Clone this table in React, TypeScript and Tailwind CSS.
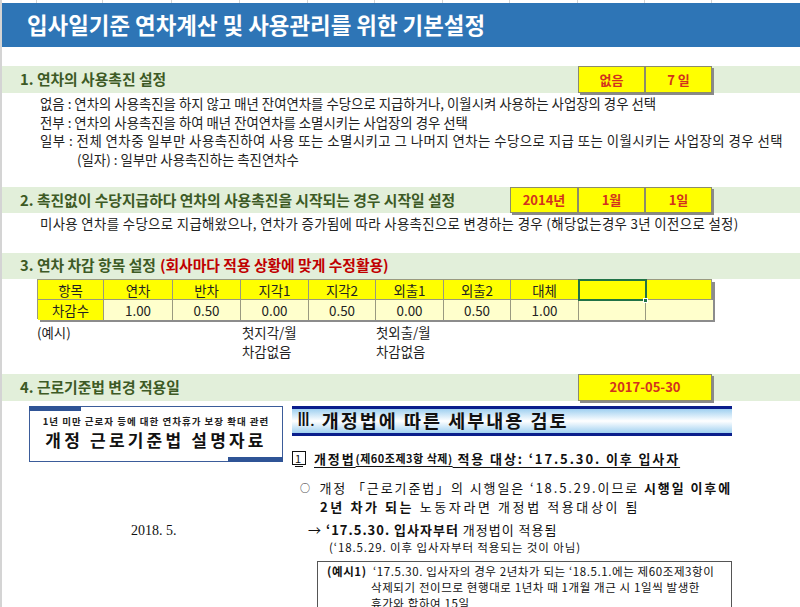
import React from 'react'

const cols = [35, 66, 69, 68, 68, 67, 68, 67, 68, 67, 67]

const yellowBox =
  'flex items-center justify-center bg-[#FFFF00] border border-[#8C8C6A] shadow-[2px_2px_0_#8A8A8A] text-[#D2321E] font-bold text-[13px]'

function SectionBar({ title, children, h = 'h-[27px]' }: { title: React.ReactNode; children?: React.ReactNode; h?: string }) {
  return (
    <div className={`grid grid-cols-[35px_66px_69px_68px_68px_67px_68px_67px_68px_67px_67px_1fr] ${h} bg-[#E2EFDA]`}>
      <div className="col-start-1 col-end-9 row-start-1 flex items-center pl-[18px] text-[14.8px] font-bold text-[#3D5A25] whitespace-nowrap">
        {title}
      </div>
      {children}
    </div>
  )
}

function Line({ children, indent = 'pl-[38px]', extra = '' }: { children: React.ReactNode; indent?: string; extra?: string }) {
  return <div className={`h-[18.5px] flex items-center ${indent} ${extra} text-[13.4px] text-[#222] whitespace-nowrap`}>{children}</div>
}

export default function App() {
  const heads = ['항목', '연차', '반차', '지각1', '지각2', '외출1', '외출2', '대체', '', '']
  const vals = ['차감수', '1.00', '0.50', '0.00', '0.50', '0.00', '0.50', '1.00', '', '']

  return (
    <div className="w-[800px] h-[607px] overflow-hidden bg-white font-['Noto_Sans_CJK_KR',sans-serif] border-l-[2px] border-[#D4D4D4]">
      {/* gridline strip */}
      <div className="flex h-[3px]">
        {cols.map((w, i) => (
          <div key={i} className="border-r border-[#D4D4D4]" style={{ width: w }} />
        ))}
      </div>

      {/* TITLE */}
      <div className="h-[44px] bg-[#2E75B6] flex items-center pl-[25px] text-white text-[22.4px] font-bold">
        입사일기준 연차계산 및 사용관리를 위한 기본설정
      </div>

      <div className="h-[19px]" />

      {/* 1 */}
      <SectionBar title="1. 연차의 사용촉진 설정">
        <div className={`col-start-10 row-start-1 ${yellowBox}`}>없음</div>
        <div className={`col-start-11 row-start-1 ${yellowBox}`}>7 일</div>
      </SectionBar>
      <div className="pt-[1px]">
        <Line>없음 : 연차의 사용촉진을 하지 않고 매년 잔여연차를 수당으로 지급하거나, 이월시켜 사용하는 사업장의 경우 선택</Line>
        <Line>전부 : 연차의 사용촉진을 하여 매년 잔여연차를 소멸시키는 사업장의 경우 선택</Line>
        <Line extra="tracking-[0.45px]">일부 : 전체 연차중 일부만 사용촉진하여 사용 또는 소멸시키고 그 나머지 연차는 수당으로 지급 또는 이월시키는 사업장의 경우 선택</Line>
        <Line indent="pl-[75px]">(일자) : 일부만 사용촉진하는 촉진연차수</Line>
      </div>

      <div className="h-[19px]" />

      {/* 2 */}
      <SectionBar h="h-[26px]" title="2. 촉진없이 수당지급하다 연차의 사용촉진을 시작되는 경우 시작일 설정">
        <div className={`col-start-9 row-start-1 ${yellowBox}`}>2014년</div>
        <div className={`col-start-10 row-start-1 ${yellowBox}`}>1월</div>
        <div className={`col-start-11 row-start-1 ${yellowBox}`}>1일</div>
      </SectionBar>
      <div className="pt-[1px]">
        <Line extra="tracking-[0.35px]">미사용 연차를 수당으로 지급해왔으나, 연차가 증가됨에 따라 사용촉진으로 변경하는 경우 (해당없는경우 3년 이전으로 설정)</Line>
      </div>

      <div className="h-[20px]" />

      {/* 3 */}
      <SectionBar
        h="h-[26px]"
        title={
          <>
            3. 연차 차감 항목 설정 <span className="ml-[4px] text-[#C00000]">(회사마다 적용 상황에 맞게 수정활용)</span>
          </>
        }
      />
      <div className="pl-[35px]">
        <div className="w-[675px] shadow-[3px_3px_0_#8C8C8C] border border-[#9A9A80]">
          <div className="grid grid-cols-[66px_69px_68px_68px_67px_68px_67px_68px_67px_67px] h-[19px] bg-[#FFFF00] text-[13.4px] text-[#222]">
            {heads.map((h, i) => (
              <div
                key={i}
                className={`relative flex items-center justify-center ${i < 9 ? 'border-r' : ''} border-[#9A9A80] ${
                  i === 8 ? 'outline-2 outline-[#217346] -outline-offset-1' : ''
                }`}
              >
                {h}
                {i === 8 && <span className="absolute -right-[3px] -bottom-[3px] w-[5px] h-[5px] bg-[#217346] border border-white" />}
              </div>
            ))}
          </div>
          <div className="grid grid-cols-[66px_69px_68px_68px_67px_68px_67px_68px_67px_67px] h-[19px] border-t border-[#9A9A80] text-[13.4px] text-[#222]">
            {vals.map((v, i) => (
              <div
                key={i}
                className={`flex items-center justify-center ${i < 9 ? 'border-r' : ''} border-[#9A9A80] ${
                  i === 0 ? 'bg-[#FFFF00]' : 'bg-[#FFFFCC]'
                }`}
              >
                {v}
              </div>
            ))}
          </div>
        </div>
      </div>
      <div className="pt-[3px] text-[13.4px] text-[#222]">
        <div className="grid grid-cols-[35px_205px_134px_1fr] h-[19px] items-center">
          <div className="col-start-2">(예시)</div>
          <div>첫지각/월</div>
          <div>첫외출/월</div>
        </div>
        <div className="grid grid-cols-[35px_205px_134px_1fr] h-[19px] items-center">
          <div className="col-start-3">차감없음</div>
          <div>차감없음</div>
        </div>
      </div>

      <div className="h-[14px]" />

      {/* 4 */}
      <SectionBar title="4. 근로기준법 변경 적용일">
        <div className={`col-start-10 col-end-12 row-start-1 ${yellowBox}`}>2017-05-30</div>
      </SectionBar>

      {/* PICTURES */}
      <div className="flex pt-[5px]">
        {/* left picture */}
        <div className="ml-[27px] w-[254px]">
          <div className="relative h-[56px] border border-[#3B5C9A] flex flex-col items-center justify-center">
            <span className="absolute -top-[1px] -left-[1px] w-[52px] h-[5px] bg-[#2F5496]" />
            <span className="absolute -bottom-[1px] -right-[1px] w-[55px] h-[5px] bg-[#2F5496]" />
            <div className="text-[9.5px] font-bold text-[#222] tracking-[1px] leading-[13px]">1년 미만 근로자 등에 대한 연차휴가 보장 확대 관련</div>
            <div className="text-[17px] font-bold text-[#111] tracking-[3.2px] leading-[24px]">개정 근로기준법 설명자료</div>
          </div>
          <div className="mt-[58px] pl-[102px] font-['Liberation_Serif',serif] text-[14px] text-[#111]">2018. 5.</div>
        </div>

        {/* right picture */}
        <div className="ml-[9px] w-[440px] text-[#111]">
          <div className="h-[30px] border-t-[3px] border-b-[3px] border-[#0A1E8C] bg-gradient-to-b from-[#9FD0F0] via-white to-[#9FD0F0] flex items-center pl-[5px]">
            <span className="font-['Liberation_Serif',serif] text-[19px] mr-[7px]">Ⅲ.</span>
            <span className="text-[18.5px] font-bold tracking-[2px]">개정법에 따른 세부내용 검토</span>
          </div>
          <div className="mt-[13px] flex items-center text-[13px] font-bold underline underline-offset-[3px] whitespace-nowrap tracking-[1.9px]">
            <span className="inline-flex items-center justify-center w-[14px] h-[14px] border border-[#111] text-[11px] font-normal mr-[8px]">1</span>
            개정법<span className="text-[11px] tracking-[0.5px]">(제60조제3항 삭제)</span>&nbsp;적용 대상: ‘17.5.30. 이후 입사자
          </div>
          <div className="mt-[10px] pl-[8px] flex items-center text-[13px] tracking-[1.9px] whitespace-nowrap">
            <span className="w-[20px] text-[10px]">○</span>
            <span>
              개정 「근로기준법」의 시행일은 ‘18.5.29.이므로 <b>시행일 이후에</b>
            </span>
          </div>
          <div className="pl-[28px] text-[13px] tracking-[2.6px] whitespace-nowrap leading-[18px]">
            <b>2년 차가 되는</b> 노동자라면 개정법 적용대상이 됨
          </div>
          <div className="mt-[4px] pl-[16px] text-[13px] tracking-[1px] whitespace-nowrap">
            → <b>‘17.5.30. 입사자부터</b> 개정법이 적용됨
          </div>
          <div className="pl-[37px] text-[11.5px] tracking-[0.9px] whitespace-nowrap">(‘18.5.29. 이후 입사자부터 적용되는 것이 아님)</div>
          <div className="mt-[5px] ml-[25px] h-[60px] overflow-hidden border border-[#555] border-b-0 pt-[1px] pl-[9px] text-[11.5px] leading-[16px] whitespace-nowrap tracking-[0.6px]">
            <div>
              <b>(예시1)</b>&nbsp; ‘17.5.30. 입사자의 경우 2년차가 되는 ‘18.5.1.에는 제60조제3항이
            </div>
            <div className="pl-[44px]">삭제되기 전이므로 현행대로 1년차 때 1개월 개근 시 1일씩 발생한</div>
            <div className="pl-[44px]">휴가와 합하여 15일</div>
          </div>
        </div>
      </div>
    </div>
  )
}
